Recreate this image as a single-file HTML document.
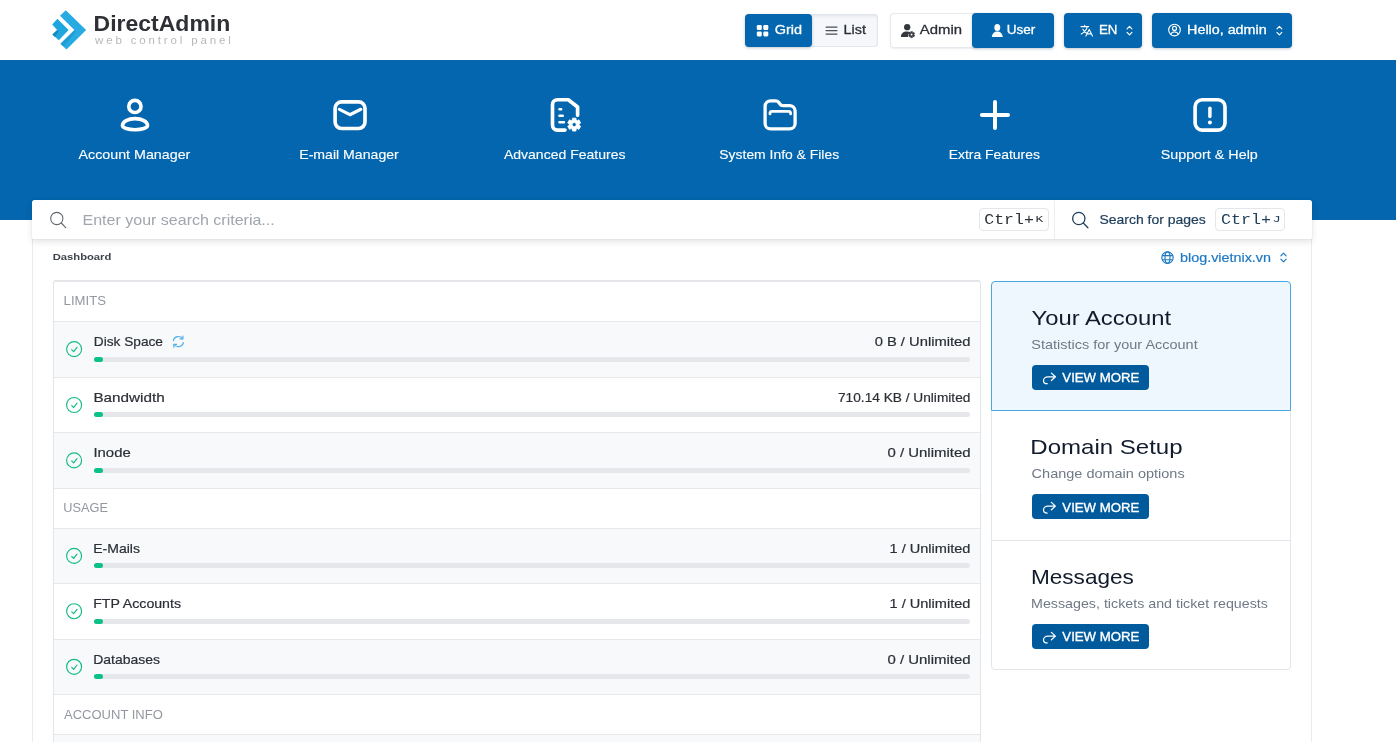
<!DOCTYPE html>
<html><head><meta charset="utf-8"><title>DirectAdmin</title>
<style>
*{box-sizing:border-box;margin:0;padding:0}
html,body{width:1396px;height:742px;overflow:hidden;background:#fff;font-family:"Liberation Sans",sans-serif;color:#2b2f36}
.a{position:absolute}
.t{position:absolute;white-space:nowrap;line-height:1;transform-origin:0 0;display:block}
#hdr{position:absolute;left:0;top:0;width:1396px;height:60px;background:#fff}
#nav{position:absolute;left:0;top:60px;width:1396px;height:160px;background:#0366ae}
.btn{position:absolute;top:13px;height:34.5px;border-radius:4px}
.blue{background:#0366ae;box-shadow:0 1px 3px rgba(0,30,70,.25)}
.lite{background:#f5f7fa;box-shadow:inset 0 0 0 1px #e2e6eb,inset 0 2px 3px rgba(60,80,110,.10)}
.wht{background:#fff;box-shadow:inset 0 0 0 1px #e6e9ed,0 1px 2px rgba(60,80,110,.10)}
#wrap{position:absolute;left:32px;top:220px;width:1280px;height:540px;background:#fff;border-left:1px solid #e9ebee;border-right:1px solid #e9ebee}
#search{position:absolute;left:32px;top:200px;width:1280px;height:39px;background:#fff;border-radius:2.5px 2.5px 1px 1px;box-shadow:0 3px 6px rgba(40,50,70,.13),0 0 1px rgba(40,50,70,.25)}
.kbd{position:absolute;top:208px;height:22.5px;border:1px solid #e3e6ea;border-radius:4px;background:#fff}
#panel{position:absolute;left:53px;top:280px;width:928px;height:480px;border:1px solid #e3e4e8;border-top:2px solid #e4e5e8;border-radius:3px 3px 0 0;background:#fff}
.ln{position:absolute;left:54px;width:926px;height:1px;background:#e6e8ec}
.g{position:absolute;left:54px;width:926px;background:#f8f9fb}
.bar{position:absolute;left:94px;width:876px;height:5px;border-radius:2.5px;background:#e5e7ea}
.bar i{position:absolute;left:0;top:0;width:9px;height:5px;border-radius:2.5px;background:#0bc187}
.card{position:absolute;left:991px;width:300px;background:#fff;border:1px solid #e2e5e9}
.vm{position:absolute;left:1032px;width:117px;height:25px;border-radius:4px;background:#015a9c}
svg{position:absolute;overflow:visible}
#tx{position:absolute;left:0;top:0;width:1396px;height:742px;will-change:transform}

</style></head><body>
<div id="hdr"><div class="btn lite" style="left:806px;width:72px;top:13.800px;height:33.200px;border-radius:0 4px 4px 0"></div><div class="btn blue" style="left:745px;width:67px;top:13.800px;height:33.200px"></div><div class="btn wht" style="left:889.500px;width:89px;border-radius:4px 0 0 4px"></div><div class="btn blue" style="left:972px;width:82px"></div><div class="btn blue" style="left:1064.300px;width:77.400px"></div><div class="btn blue" style="left:1152.300px;width:139.400px"></div><span class="t" style="will-change:transform;left:95px;top:34.800px;font-size:11.5px;letter-spacing:2.85px;color:#b6b8bb">web control panel</span><svg style="left:0;top:0" width="1396" height="60" viewBox="0 0 1396 60">
<!-- logo -->
<polygon points="52.2,24.6 57.4,18.8 68.6,30 58.8,40.3 52.4,34.6 57.2,30" fill="#1ea7df"/>
<polygon points="52.4,34.6 57.2,30 58.6,31.4 55,36.9" fill="#1689bd"/>
<polygon points="60,15.8 65.8,10.3 86.1,30.1 66.5,49.4 60.4,43.8 74.4,30.1" fill="#27abe2"/>
<polygon points="60.4,43.8 74.4,30.1 76,31.7 63.5,46.6" fill="#1b93c9" opacity=".55"/>
<!-- grid icon -->
<g fill="#fff"><rect x="756.8" y="25" width="5" height="5" rx="1.3"/><rect x="763.3" y="25" width="5" height="5" rx="1.3"/><rect x="756.8" y="31.4" width="5" height="5" rx="1.3"/><rect x="763.3" y="31.4" width="5" height="5" rx="1.3"/></g>
<!-- list icon -->
<path d="M826 27.1H837M826 30.6H837M826 34.1H837" stroke="#4a4e55" stroke-width="1.1" stroke-linecap="round"/>
<!-- admin icon -->
<g fill="#34373d"><circle cx="907.200" cy="27.200" r="3.150"/><path d="M901 37c0-3.4 2.2-5.4 6-5.4 1.4 0 2.6.3 3.5.8-1.6.6-2.6 2-2.600 3.600 0 .4 0 .7.1 1z"/>
<path d="M912.75 36.59L912.51 36.71L912.51 37.77L910.69 37.77L910.69 36.71L910.45 36.59L910.22 36.44L909.31 36.98L908.40 35.40L909.32 34.87L909.30 34.60L909.32 34.33L908.40 33.80L909.31 32.22L910.22 32.76L910.45 32.61L910.69 32.49L910.69 31.43L912.51 31.43L912.51 32.49L912.75 32.61L912.98 32.76L913.89 32.22L914.80 33.80L913.88 34.33L913.90 34.60L913.88 34.87L914.80 35.40L913.89 36.98L912.98 36.44ZM910.45 34.60a1.15 1.15 0 1 0 2.3 0a1.15 1.15 0 1 0 -2.3 0Z" fill="#34373d" fill-rule="evenodd" stroke="#34373d" stroke-width="0.4" stroke-linejoin="round"/></g>
<!-- user icon -->
<g fill="#fff"><ellipse cx="997.300" cy="27.500" rx="2.950" ry="3.500"/><path d="M991.8 37c.3-3.6 2.300-5.600 5.500-5.600s5.200 2 5.500 5.600z"/></g>
<!-- translate icon -->
<g fill="none" stroke="#fff" stroke-width="1.1" stroke-linecap="round" stroke-linejoin="round"><path d="M1081 26.600h7.600M1084.700 25.300v1.300M1087.300 26.600c-.8 3.300-2.900 5.800-6.100 7.400M1082.900 29.300c.8 1.700 2.100 3 3.700 3.900M1085.900 36.100l3.300-6.600 3.300 6.600M1087 33.900h4.400"/></g>
<path d="M1127.1 28.8L1129.5 26.400000000000002L1131.9 28.8M1127.1 32.400000000000006L1129.5 34.800000000000004L1131.9 32.400000000000006" fill="none" stroke="#fff" stroke-width="1.2" stroke-linecap="round" stroke-linejoin="round"/>
<!-- user circle -->
<g fill="none" stroke="#fff" stroke-width="1.15"><circle cx="1174.500" cy="30" r="5.800"/><circle cx="1174.500" cy="28.400" r="2"/><path d="M1170.600 34.200c.8-1.500 2.200-2.300 3.900-2.300s3.100.8 3.900 2.300"/></g>
<path d="M1277.0 28.8L1279.4 26.400000000000002L1281.8000000000002 28.8M1277.0 32.400000000000006L1279.4 34.800000000000004L1281.8000000000002 32.400000000000006" fill="none" stroke="#fff" stroke-width="1.2" stroke-linecap="round" stroke-linejoin="round"/>
</svg></div>
<div id="nav"></div><svg style="left:0;top:60px" width="1396" height="160" viewBox="0 60 1396 160"><g fill="none" stroke="#fff" stroke-width="3.650" stroke-linecap="round" stroke-linejoin="round"><circle cx="134.9" cy="106.4" r="6.1"/><path d="M122.500 125.600A12.500 7 0 0 1 147.500 125.600A12.500 4.100 0 0 1 122.500 125.600Z"/><rect x="335.1" y="101.8" width="29.9" height="26.7" rx="6.5"/><path d="M339.400 109.300L349.900 114.700L360.800 109.300" stroke-width="3.2"/><path d="M565 130.100H557.500a5 5 0 0 1-5-5V104.700a5 5 0 0 1 5-5H568.300L577.600 107V115.300"/><path d="M559.400 109.300H561.200M559.400 115.700H562.800M559.400 122.300H564" stroke-width="2.4"/><path d="M765.100 106.400a5.500 5.500 0 0 1 5.500-5.500h4.800c1.800 0 2.900.6 3.900 2.200l.6.900c.8 1.200 1.500 1.600 3 1.600h6.700a5.500 5.500 0 0 1 5.500 5.500V123.400a5.500 5.500 0 0 1-5.500 5.500H770.600a5.500 5.500 0 0 1-5.500-5.500z" stroke-width="3.300"/><path d="M770 113.900v-.6a2 2 0 0 1 2-2h16.600a2 2 0 0 1 2 2v.6" stroke-width="2.800"/><path d="M995 102V128.100M981.900 115H1008" stroke-width="4"/><rect x="1195.100" y="99.700" width="29.900" height="30.400" rx="7"/><path d="M1209.900 108.200V116.500" stroke-width="3.500"/></g><circle cx="1209.900" cy="122.400" r="2" fill="#fff"/><path d="M576.65 128.84L576.07 129.13L575.99 131.06L572.41 131.06L572.33 129.13L571.75 128.84L571.21 128.48L569.50 129.38L567.71 126.28L569.34 125.25L569.30 124.60L569.34 123.95L567.71 122.92L569.50 119.82L571.21 120.72L571.75 120.36L572.33 120.07L572.41 118.14L575.99 118.14L576.07 120.07L576.65 120.36L577.19 120.72L578.90 119.82L580.69 122.92L579.06 123.95L579.10 124.60L579.06 125.25L580.69 126.28L578.90 129.38L577.19 128.48ZM572.10 124.60a2.1 2.1 0 1 0 4.2 0a2.1 2.1 0 1 0 -4.2 0Z" fill="#fff" fill-rule="evenodd" stroke="#fff" stroke-width="0.8" stroke-linejoin="round"/></svg>
<div id="wrap"></div>
<div id="search"></div>
<div class="kbd" style="left:978.500px;width:70px"></div><div class="kbd" style="left:1215.400px;width:70px"></div><div class="a" style="left:1054px;top:200px;width:1px;height:39px;background:#eceef1"></div>
<div id="panel"></div><div class="g" style="top:321px;height:56px"></div><div class="g" style="top:432px;height:56px"></div><div class="g" style="top:528px;height:55px"></div><div class="g" style="top:639px;height:55px"></div><div class="g" style="top:734px;height:26px"></div><div class="ln" style="top:321px"></div><div class="ln" style="top:377px"></div><div class="ln" style="top:432px"></div><div class="ln" style="top:488px"></div><div class="ln" style="top:528px"></div><div class="ln" style="top:583px"></div><div class="ln" style="top:639px"></div><div class="ln" style="top:694px"></div><div class="ln" style="top:734px"></div><div class="bar" style="top:357px"><i></i></div><div class="bar" style="top:412px"><i></i></div><div class="bar" style="top:468px"><i></i></div><div class="bar" style="top:563px"><i></i></div><div class="bar" style="top:619px"><i></i></div><div class="bar" style="top:674px"><i></i></div>
<div class="card" style="top:411px;height:130px;border-top:0"></div><div class="card" style="top:540px;height:129.500px;border-radius:0 0 4px 4px"></div><div class="card" style="top:281px;height:130px;background:#eef7fd;border-color:#48a9de;border-radius:4px 4px 0 0"></div><div class="vm" style="top:365px"></div><div class="vm" style="top:494.3px"></div><div class="vm" style="top:624.3px"></div><svg style="left:0;top:190px" width="1396" height="552" viewBox="0 190 1396 552"><g fill="none" stroke="#62676f" stroke-width="1.1" stroke-linecap="round"><circle cx="56.800" cy="218.500" r="6.100"/><path d="M61.300 223L65.700 227.700"/></g><g fill="none" stroke="#21405d" stroke-width="1.3" stroke-linecap="round"><circle cx="1078.800" cy="218.500" r="6.150"/><path d="M1083.300 223L1087.900 227.700"/></g><circle cx="74.1" cy="349.1" r="7.5" fill="none" stroke="#12bb86" stroke-width="1.15"/><path d="M71.700 349.7L73.700 351.6L77 347.3" fill="none" stroke="#12bb86" stroke-width="1.15" stroke-linecap="round" stroke-linejoin="round"/><circle cx="74.1" cy="405" r="7.5" fill="none" stroke="#12bb86" stroke-width="1.15"/><path d="M71.700 405.6L73.700 407.5L77 403.2" fill="none" stroke="#12bb86" stroke-width="1.15" stroke-linecap="round" stroke-linejoin="round"/><circle cx="74.1" cy="460.4" r="7.5" fill="none" stroke="#12bb86" stroke-width="1.15"/><path d="M71.700 461.0L73.700 462.9L77 458.6" fill="none" stroke="#12bb86" stroke-width="1.15" stroke-linecap="round" stroke-linejoin="round"/><circle cx="74.1" cy="555.9" r="7.5" fill="none" stroke="#12bb86" stroke-width="1.15"/><path d="M71.700 556.5L73.700 558.4L77 554.1" fill="none" stroke="#12bb86" stroke-width="1.15" stroke-linecap="round" stroke-linejoin="round"/><circle cx="74.1" cy="611.2" r="7.5" fill="none" stroke="#12bb86" stroke-width="1.15"/><path d="M71.700 611.8L73.700 613.7L77 609.4" fill="none" stroke="#12bb86" stroke-width="1.15" stroke-linecap="round" stroke-linejoin="round"/><circle cx="74.1" cy="666.8" r="7.5" fill="none" stroke="#12bb86" stroke-width="1.15"/><path d="M71.700 667.4L73.700 669.3L77 665.0" fill="none" stroke="#12bb86" stroke-width="1.15" stroke-linecap="round" stroke-linejoin="round"/><g fill="none" stroke="#52b0ea" stroke-width="1.2" stroke-linecap="round" stroke-linejoin="round"><path d="M173.300 340.600a5.200 5.200 0 0 1 9.300-1.900M183.400 342.600a5.200 5.200 0 0 1-9.300 1.900"/><path d="M182.900 336v2.900h-2.900M173.800 347.200v-2.900h2.900"/></g><g fill="none" stroke="#1f7ac4" stroke-width="1.15"><circle cx="1167.500" cy="257.600" r="5.700"/><ellipse cx="1167.500" cy="257.600" rx="2.500" ry="5.700"/><path d="M1162.300 255.600h10.400M1162.300 259.700h10.400"/></g><path d="M1280.9 255.8L1283.5 253.20000000000002L1286.1 255.8M1280.9 259.2L1283.5 261.8L1286.1 259.2" fill="none" stroke="#1f7ac4" stroke-width="1.2" stroke-linecap="round" stroke-linejoin="round"/><g transform="translate(1042.8,372.3)" fill="none" stroke="#fff" stroke-width="1.25" stroke-linecap="round" stroke-linejoin="round"><path d="M8.600 0.800L12.600 4.500L8.600 8.200M12.300 4.500H5.200C2.600 4.500 0.700 6.200 0.700 8.400S2.400 11.400 4.400 11.400"/></g><g transform="translate(1042.8,501.6)" fill="none" stroke="#fff" stroke-width="1.25" stroke-linecap="round" stroke-linejoin="round"><path d="M8.600 0.800L12.600 4.500L8.600 8.200M12.300 4.500H5.200C2.600 4.500 0.700 6.200 0.700 8.400S2.400 11.400 4.400 11.400"/></g><g transform="translate(1042.8,631.6)" fill="none" stroke="#fff" stroke-width="1.25" stroke-linecap="round" stroke-linejoin="round"><path d="M8.600 0.800L12.600 4.500L8.600 8.200M12.300 4.500H5.200C2.600 4.500 0.700 6.200 0.700 8.400S2.400 11.400 4.400 11.400"/></g></svg>
<div id="tx"><span class="t" id="lg1" style="left:93px;top:13px;font-size:21.5px;font-weight:700;color:#2e3035;transform:translate(0.56px,0.80px) scaleX(1.0696);">DirectAdmin</span>
<span class="t" id="bGrid" style="left:774px;top:22px;font-size:13px;font-weight:400;color:#fff;transform:translate(0.76px,0.90px) scaleX(1.1124);-webkit-text-stroke:0.3px currentColor;">Grid</span>
<span class="t" id="bList" style="left:843px;top:22px;font-size:13px;font-weight:400;color:#2b2f36;transform:translate(0.51px,0.90px) scaleX(1.1066);-webkit-text-stroke:0.3px currentColor;">List</span>
<span class="t" id="bAdmin" style="left:919px;top:22px;font-size:13px;font-weight:400;color:#2b2f36;transform:translate(0.85px,0.80px) scaleX(1.1425);-webkit-text-stroke:0.3px currentColor;">Admin</span>
<span class="t" id="bUser" style="left:1006px;top:22px;font-size:13px;font-weight:400;color:#fff;transform:translate(0.76px,0.80px) scaleX(1.0431);-webkit-text-stroke:0.3px currentColor;">User</span>
<span class="t" id="bEN" style="left:1098px;top:22px;font-size:13px;font-weight:400;color:#fff;transform:translate(0.88px,0.80px) scaleX(1.0227);-webkit-text-stroke:0.3px currentColor;">EN</span>
<span class="t" id="bHello" style="left:1187px;top:22px;font-size:13px;font-weight:400;color:#fff;transform:translate(0.10px,0.80px) scaleX(1.1008);-webkit-text-stroke:0.3px currentColor;">Hello, admin</span>
<span class="t" id="n1" style="left:78px;top:148px;font-size:13.2px;font-weight:400;color:#fff;transform:translate(0.51px,0.00px) scaleX(1.0820);-webkit-text-stroke:0.12px currentColor;">Account Manager</span>
<span class="t" id="n2" style="left:299px;top:148px;font-size:13.2px;font-weight:400;color:#fff;transform:translate(0.25px,0.00px) scaleX(1.0691);-webkit-text-stroke:0.12px currentColor;">E-mail Manager</span>
<span class="t" id="n3" style="left:503px;top:148px;font-size:13.2px;font-weight:400;color:#fff;transform:translate(0.90px,0.00px) scaleX(1.0635);-webkit-text-stroke:0.12px currentColor;">Advanced Features</span>
<span class="t" id="n4" style="left:719px;top:148px;font-size:13.2px;font-weight:400;color:#fff;transform:translate(0.35px,0.00px) scaleX(1.0543);-webkit-text-stroke:0.12px currentColor;">System Info &amp; Files</span>
<span class="t" id="n5" style="left:948px;top:148px;font-size:13.2px;font-weight:400;color:#fff;transform:translate(0.67px,0.00px) scaleX(1.0550);-webkit-text-stroke:0.12px currentColor;">Extra Features</span>
<span class="t" id="n6" style="left:1160px;top:148px;font-size:13.2px;font-weight:400;color:#fff;transform:translate(0.66px,0.00px) scaleX(1.0860);-webkit-text-stroke:0.12px currentColor;">Support &amp; Help</span>
<span class="t" id="ph" style="left:82px;top:212px;font-size:14.3px;font-weight:400;color:#a0a5ae;transform:translate(0.50px,0.80px) scaleX(1.1200);">Enter your search criteria...</span>
<span class="t" id="sfp" style="left:1099px;top:212px;font-size:13px;font-weight:400;color:#21405d;transform:translate(0.39px,0.80px) scaleX(1.0748);-webkit-text-stroke:0.2px currentColor;">Search for pages</span>
<span class="t" id="bc" style="left:52px;top:252px;font-size:9.6px;font-weight:700;color:#3d424b;transform:translate(0.69px,0.10px) scaleX(1.1696);">Dashboard</span>
<span class="t" id="dom" style="left:1180px;top:250px;font-size:13px;font-weight:400;color:#1f7ac4;transform:translate(0.03px,0.50px) scaleX(1.1042);-webkit-text-stroke:0.2px currentColor;">blog.vietnix.vn</span>
<span class="t" id="s1" style="left:63px;top:294px;font-size:12.8px;font-weight:400;color:#9397a0;transform:translate(0.57px,0.80px) scaleX(1.0277);">LIMITS</span>
<span class="t" id="s2" style="left:63px;top:501px;font-size:12.8px;font-weight:400;color:#9397a0;transform:translate(0.28px,0.80px) scaleX(0.9972);">USAGE</span>
<span class="t" id="s3" style="left:64px;top:708px;font-size:12.8px;font-weight:400;color:#9397a0;transform:translate(0.07px,0.70px) scaleX(1.0156);">ACCOUNT INFO</span>
<span class="t" id="l1" style="left:93px;top:334px;font-size:13px;font-weight:400;color:#2b2f36;transform:translate(0.75px,0.90px) scaleX(1.0526);-webkit-text-stroke:0.2px currentColor;">Disk Space</span>
<span class="t" id="l2" style="left:93px;top:390px;font-size:13px;font-weight:400;color:#2b2f36;transform:translate(0.46px,0.80px) scaleX(1.1720);-webkit-text-stroke:0.2px currentColor;">Bandwidth</span>
<span class="t" id="l3" style="left:93px;top:445px;font-size:13px;font-weight:400;color:#2b2f36;transform:translate(0.45px,0.80px) scaleX(1.1448);-webkit-text-stroke:0.2px currentColor;">Inode</span>
<span class="t" id="l4" style="left:93px;top:542px;font-size:13px;font-weight:400;color:#2b2f36;transform:translate(0.22px,0.00px) scaleX(1.0780);-webkit-text-stroke:0.2px currentColor;">E-Mails</span>
<span class="t" id="l5" style="left:93px;top:596px;font-size:13px;font-weight:400;color:#2b2f36;transform:translate(0.19px,0.80px) scaleX(1.0881);-webkit-text-stroke:0.2px currentColor;">FTP Accounts</span>
<span class="t" id="l6" style="left:93px;top:653px;font-size:13px;font-weight:400;color:#2b2f36;transform:translate(0.23px,0.00px) scaleX(1.0753);-webkit-text-stroke:0.2px currentColor;">Databases</span>
<span class="t" id="v1" style="left:874px;top:334px;font-size:13px;font-weight:400;color:#2b2f36;transform:translate(0.64px,0.90px) scaleX(1.1338);-webkit-text-stroke:0.2px currentColor;">0 B / Unlimited</span>
<span class="t" id="v2" style="left:837px;top:390px;font-size:13px;font-weight:400;color:#2b2f36;transform:translate(0.98px,0.80px) scaleX(1.0531);-webkit-text-stroke:0.2px currentColor;">710.14 KB / Unlimited</span>
<span class="t" id="v3" style="left:887px;top:445px;font-size:13px;font-weight:400;color:#2b2f36;transform:translate(0.41px,0.80px) scaleX(1.1502);-webkit-text-stroke:0.2px currentColor;">0 / Unlimited</span>
<span class="t" id="v4" style="left:889px;top:542px;font-size:13px;font-weight:400;color:#2b2f36;transform:translate(0.54px,0.00px) scaleX(1.1193);-webkit-text-stroke:0.2px currentColor;">1 / Unlimited</span>
<span class="t" id="v5" style="left:889px;top:596px;font-size:13px;font-weight:400;color:#2b2f36;transform:translate(0.54px,0.80px) scaleX(1.1193);-webkit-text-stroke:0.2px currentColor;">1 / Unlimited</span>
<span class="t" id="v6" style="left:887px;top:653px;font-size:13px;font-weight:400;color:#2b2f36;transform:translate(0.41px,0.00px) scaleX(1.1502);-webkit-text-stroke:0.2px currentColor;">0 / Unlimited</span>
<span class="t" id="h1" style="left:1031px;top:308px;font-size:20.6px;font-weight:400;color:#111b2c;transform:translate(0.54px,0.00px) scaleX(1.1565);">Your Account</span>
<span class="t" id="h2" style="left:1030px;top:437px;font-size:20.6px;font-weight:400;color:#111b2c;transform:translate(0.34px,0.20px) scaleX(1.1666);">Domain Setup</span>
<span class="t" id="h3" style="left:1030px;top:567px;font-size:20.6px;font-weight:400;color:#111b2c;transform:translate(0.93px,0.30px) scaleX(1.0969);">Messages</span>
<span class="t" id="p1" style="left:1031px;top:338px;font-size:13.3px;font-weight:400;color:#6f7986;transform:translate(0.29px,0.00px) scaleX(1.0875);">Statistics for your Account</span>
<span class="t" id="p2" style="left:1031px;top:467px;font-size:13.3px;font-weight:400;color:#6f7986;transform:translate(0.61px,0.00px) scaleX(1.0894);">Change domain options</span>
<span class="t" id="p3" style="left:1031px;top:596px;font-size:13.3px;font-weight:400;color:#6f7986;transform:translate(0.01px,0.70px) scaleX(1.0719);">Messages, tickets and ticket requests</span>
<span class="t" id="m1" style="left:1062px;top:371px;font-size:13px;font-weight:400;color:#fff;transform:translate(0.32px,0.00px) scaleX(1.0165);-webkit-text-stroke:0.35px currentColor;">VIEW MORE</span>
<span class="t" id="m2" style="left:1062px;top:500px;font-size:13px;font-weight:400;color:#fff;transform:translate(0.32px,0.50px) scaleX(1.0165);-webkit-text-stroke:0.35px currentColor;">VIEW MORE</span>
<span class="t" id="m3" style="left:1062px;top:630px;font-size:13px;font-weight:400;color:#fff;transform:translate(0.32px,0.00px) scaleX(1.0165);-webkit-text-stroke:0.35px currentColor;">VIEW MORE</span>
<span class="t" id="k1" style="left:984px;top:212px;font-size:15.5px;font-weight:400;color:#2b2f36;transform:translate(0.27px,0.70px) scaleX(1.0667);font-family:'Liberation Mono',monospace;">Ctrl+</span>
<span class="t" id="k2" style="left:1035px;top:214px;font-size:9.8px;font-weight:400;color:#2b2f36;transform:translate(0.56px,0.80px) scaleX(1.3135);font-family:'Liberation Mono',monospace;">K</span>
<span class="t" id="k3" style="left:1220px;top:212px;font-size:15.5px;font-weight:400;color:#21405d;transform:translate(0.96px,0.70px) scaleX(1.0740);font-family:'Liberation Mono',monospace;">Ctrl+</span>
<span class="t" id="k4" style="left:1272px;top:214px;font-size:9.8px;font-weight:400;color:#21405d;transform:translate(0.61px,0.80px) scaleX(1.4064);font-family:'Liberation Mono',monospace;">J</span></div>
</body></html>
